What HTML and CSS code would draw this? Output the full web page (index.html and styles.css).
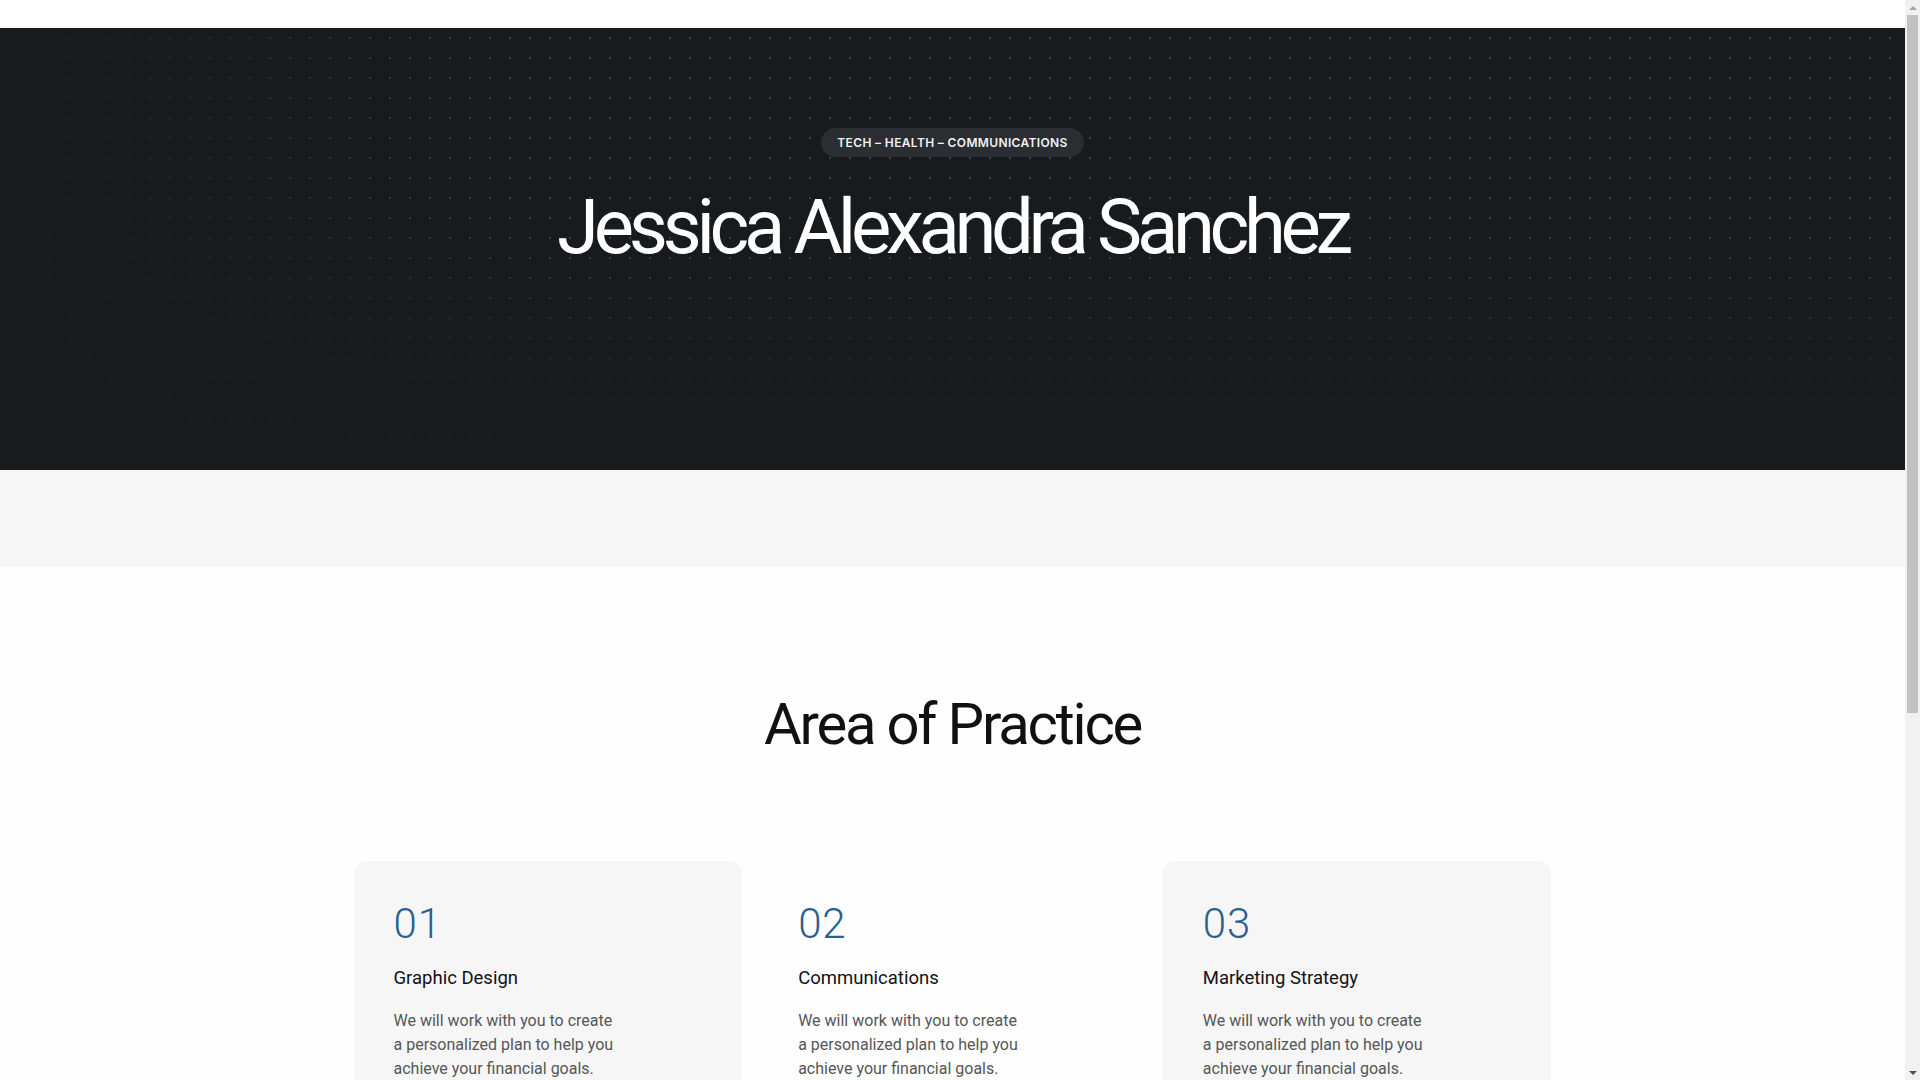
FILE: index.html
```html
<!DOCTYPE html>
<html lang="en">
<head>
<meta charset="utf-8">
<title>Jessica Alexandra Sanchez</title>
<link rel="stylesheet" href="styles.css">
</head>
<body>
<header class="topbar"></header>
<section class="hero">
  <span class="badge">TECH – HEALTH – COMMUNICATIONS</span>
  <h1 class="hero-title">Jessica Alexandra Sanchez</h1>
</section>
<div class="band"></div>
<section class="practice">
  <h2 class="practice-title">Area of Practice</h2>
  <div class="cards">
    <article class="card">
      <div class="card-num">01</div>
      <h3 class="card-title">Graphic Design</h3>
      <p class="card-text">We will work with you to create a personalized plan to help you achieve your financial goals.</p>
    </article>
    <article class="card card-plain">
      <div class="card-num">02</div>
      <h3 class="card-title">Communications</h3>
      <p class="card-text">We will work with you to create a personalized plan to help you achieve your financial goals.</p>
    </article>
    <article class="card">
      <div class="card-num">03</div>
      <h3 class="card-title">Marketing Strategy</h3>
      <p class="card-text">We will work with you to create a personalized plan to help you achieve your financial goals.</p>
    </article>
  </div>
</section>
<footer class="rest"></footer>
<div class="scrollbar" aria-hidden="true">
  <span class="sb-arrow sb-up"></span>
  <span class="sb-thumb"></span>
  <span class="sb-fill"></span>
  <span class="sb-arrow sb-down"></span>
</div>
</body>
</html>
```
FILE: styles.css
```css
html, body {
  margin: 0;
  padding: 0;
}
body {
  margin-right: 15px;
  background: #fefefe;
  font-family: Roboto, "Liberation Sans", Arial, sans-serif;
  color: #111114;
}
.topbar {
  height: 28px;
  background: #ffffff;
}
.hero {
  height: 442px;
  box-sizing: border-box;
  padding-top: 100px;
  display: flex;
  flex-direction: column;
  align-items: center;
  background:
    linear-gradient(to bottom, rgba(24,27,30,0) 40%, rgba(24,27,30,0.85) 92%, #181b1e 100%),
    linear-gradient(to right, #181b1e 0%, rgba(24,27,30,0.6) 8%, rgba(24,27,30,0) 30%),
    radial-gradient(circle at 10px 10px, rgba(255,255,255,0.16) 1.1px, rgba(255,255,255,0) 1.6px),
    #181b1e;
  background-size: auto, auto, 20px 20px, auto;
}
.badge {
  display: inline-flex;
  align-items: center;
  height: 29px;
  padding: 0 16px;
  border-radius: 15px;
  background: #2a2d31;
  color: #f2f2f2;
  font-family: Inter, "Noto Sans", sans-serif;
  font-size: 12px;
  font-weight: 600;
  letter-spacing: 0.03em;
}
.hero-title {
  margin: 24px 0 0;
  font-size: 76px;
  line-height: 92px;
  font-weight: 400;
  letter-spacing: -0.07em;
  color: #ffffff;
}
.band {
  height: 97px;
  background: #f6f6f6;
}
.practice {
  padding-top: 123px;
  display: flex;
  flex-direction: column;
  align-items: center;
}
.practice-title {
  margin: 0;
  font-size: 58px;
  line-height: 69.6px;
  font-weight: 400;
  letter-spacing: -0.038em;
  color: #111114;
}
.cards {
  margin-top: 101px;
  width: 1198px;
  display: grid;
  grid-template-columns: repeat(3, 1fr);
  gap: 16px;
}
.card {
  background: #f6f6f6;
  border-radius: 12px;
  padding: 38px 40px 48px;
  min-height: 400px;
}
.card-plain {
  background: #fefefe;
}
.card-num {
  font-size: 42px;
  line-height: 50px;
  font-weight: 300;
  color: #2b5f91;
  letter-spacing: 0.02em;
}
.card-title {
  margin: 17px 0 0;
  font-size: 18.5px;
  line-height: 25px;
  font-weight: 400;
  color: #111114;
}
.card-text {
  margin: 18px 0 0;
  max-width: 226px;
  font-size: 16px;
  line-height: 24px;
  color: #555658;
}
.rest {
  height: 200px;
}
.scrollbar {
  position: fixed;
  top: 0;
  right: 0;
  width: 15px;
  height: 100vh;
  background: #f1f1f1;
  display: flex;
  flex-direction: column;
  align-items: center;
}
.sb-arrow {
  flex: 0 0 15px;
  width: 15px;
  display: flex;
  align-items: center;
  justify-content: center;
}
.sb-arrow::before {
  content: "";
  width: 0;
  height: 0;
  border-left: 4px solid transparent;
  border-right: 4px solid transparent;
}
.sb-up::before {
  border-bottom: 4px solid #a3a3a3;
}
.sb-down::before {
  border-top: 4px solid #505050;
}
.sb-thumb {
  flex: 0 0 698px;
  width: 11px;
  background: #c1c1c1;
}
.sb-fill {
  flex: 1 1 auto;
}
```
